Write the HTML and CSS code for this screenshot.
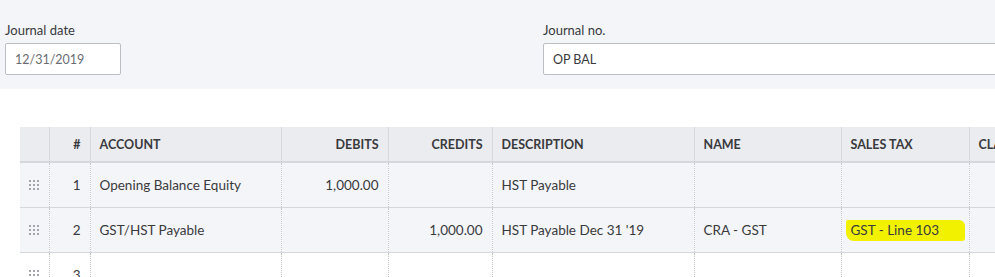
FILE: index.html
```html
<!DOCTYPE html>
<html lang="en">
<head>
    <meta charset="UTF-8">
    <title>Journal entry</title>
    <link rel="stylesheet" href="styles.css">
</head>
<body>
    <div class="top-panel">
        <div class="field field-date">
            <label>Journal date</label>
            <input type="text" class="date-input" value="12/31/2019">
        </div>
        <div class="field field-no">
            <label>Journal no.</label>
            <input type="text" class="no-input" value="OP BAL">
        </div>
    </div>

    <div class="grid-wrap">
        <table class="lines">
            <colgroup>
                <col style="width: 29px">
                <col style="width: 41px">
                <col style="width: 191px">
                <col style="width: 107px">
                <col style="width: 104px">
                <col style="width: 202px">
                <col style="width: 147px">
                <col style="width: 128px">
                <col style="width: 120px">
            </colgroup>
            <thead>
                <tr>
                    <th></th>
                    <th class="num">#</th>
                    <th>Account</th>
                    <th class="num">Debits</th>
                    <th class="num">Credits</th>
                    <th>Description</th>
                    <th>Name</th>
                    <th>Sales tax</th>
                    <th>Class</th>
                </tr>
            </thead>
            <tbody>
                <tr class="filled">
                    <td class="handle">
                        <svg class="dots" width="10" height="10" viewBox="0 0 10 10">
                            <rect x="0" y="0" width="2" height="2"/><rect x="4" y="0" width="2" height="2"/><rect x="8" y="0" width="2" height="2"/>
                            <rect x="0" y="4" width="2" height="2"/><rect x="4" y="4" width="2" height="2"/><rect x="8" y="4" width="2" height="2"/>
                            <rect x="0" y="8" width="2" height="2"/><rect x="4" y="8" width="2" height="2"/><rect x="8" y="8" width="2" height="2"/>
                        </svg>
                    </td>
                    <td class="num">1</td>
                    <td>Opening Balance Equity</td>
                    <td class="num">1,000.00</td>
                    <td class="num"></td>
                    <td>HST Payable</td>
                    <td></td>
                    <td></td>
                    <td></td>
                </tr>
                <tr class="filled">
                    <td class="handle">
                        <svg class="dots" width="10" height="10" viewBox="0 0 10 10">
                            <rect x="0" y="0" width="2" height="2"/><rect x="4" y="0" width="2" height="2"/><rect x="8" y="0" width="2" height="2"/>
                            <rect x="0" y="4" width="2" height="2"/><rect x="4" y="4" width="2" height="2"/><rect x="8" y="4" width="2" height="2"/>
                            <rect x="0" y="8" width="2" height="2"/><rect x="4" y="8" width="2" height="2"/><rect x="8" y="8" width="2" height="2"/>
                        </svg>
                    </td>
                    <td class="num">2</td>
                    <td>GST/HST Payable</td>
                    <td class="num"></td>
                    <td class="num">1,000.00</td>
                    <td>HST Payable Dec 31 '19</td>
                    <td>CRA - GST</td>
                    <td><span class="marker">GST - Line 103</span></td>
                    <td></td>
                </tr>
                <tr>
                    <td class="handle">
                        <svg class="dots" width="10" height="10" viewBox="0 0 10 10">
                            <rect x="0" y="0" width="2" height="2"/><rect x="4" y="0" width="2" height="2"/><rect x="8" y="0" width="2" height="2"/>
                            <rect x="0" y="4" width="2" height="2"/><rect x="4" y="4" width="2" height="2"/><rect x="8" y="4" width="2" height="2"/>
                            <rect x="0" y="8" width="2" height="2"/><rect x="4" y="8" width="2" height="2"/><rect x="8" y="8" width="2" height="2"/>
                        </svg>
                    </td>
                    <td class="num">3</td>
                    <td></td>
                    <td class="num"></td>
                    <td class="num"></td>
                    <td></td>
                    <td></td>
                    <td></td>
                    <td></td>
                </tr>
            </tbody>
        </table>
    </div>
</body>
</html>
```

FILE: styles.css
```css
body {
    margin: 0;
    font-family: Lato, "Open Sans", Arial, sans-serif;
    color: #393a3d;
    background: #fff;
    overflow: hidden;
}
.top-panel {
    height: 89px;
    background-color: #f4f5f8;
    display: flex;
    padding-left: 5px;
    box-sizing: border-box;
}
.field {
    display: flex;
    flex-direction: column;
    padding-top: 22px;
}
.field label {
    font-size: 13px;
    line-height: 16px;
    margin-bottom: 5px;
}
.field-no {
    margin-left: 422px;
}
input {
    height: 32px;
    box-sizing: border-box;
    border: 1px solid #babec5;
    border-radius: 2px;
    background: #fff;
    font-family: inherit;
    font-size: 12.5px;
    color: #393a3d;
    padding: 0 9px;
    outline: none;
}
.date-input {
    width: 116px;
    color: #6b6c72;
}
.no-input {
    width: 460px;
}
.grid-wrap {
    margin-top: 38px;
    margin-left: 20px;
}
.lines {
    table-layout: fixed;
    width: 1069px;
    border-collapse: collapse;
}
th {
    height: 34px;
    padding: 0 9px;
    background-color: #ebecf0;
    font-size: 12.5px;
    font-weight: 700;
    text-transform: uppercase;
    text-align: left;
    border-left: 1px solid #d4d7dc;
    border-bottom: 2px solid #d4d7dc;
    white-space: nowrap;
    overflow: hidden;
}
th:first-child {
    border-left: none;
}
td {
    height: 44px;
    padding: 0 9px;
    font-size: 13.5px;
    border-left: 1px dotted #c4c6cc;
    border-bottom: 1px solid #d4d7dc;
    white-space: nowrap;
    overflow: hidden;
}
td:first-child {
    border-left: none;
}
tbody tr:last-child td {
    border-bottom: none;
}
.filled td {
    background-color: #f4f5f8;
}
.num {
    text-align: right;
}
.handle {
    padding: 0 0 0 9px;
}
.dots {
    display: block;
    fill: #a4a5aa;
}
.marker {
    display: inline-block;
    background-color: #f2f200;
    padding: 2px 26px 3px 5px;
    margin-left: -5px;
    border-radius: 2px 6px 3px 8px;
}
```
